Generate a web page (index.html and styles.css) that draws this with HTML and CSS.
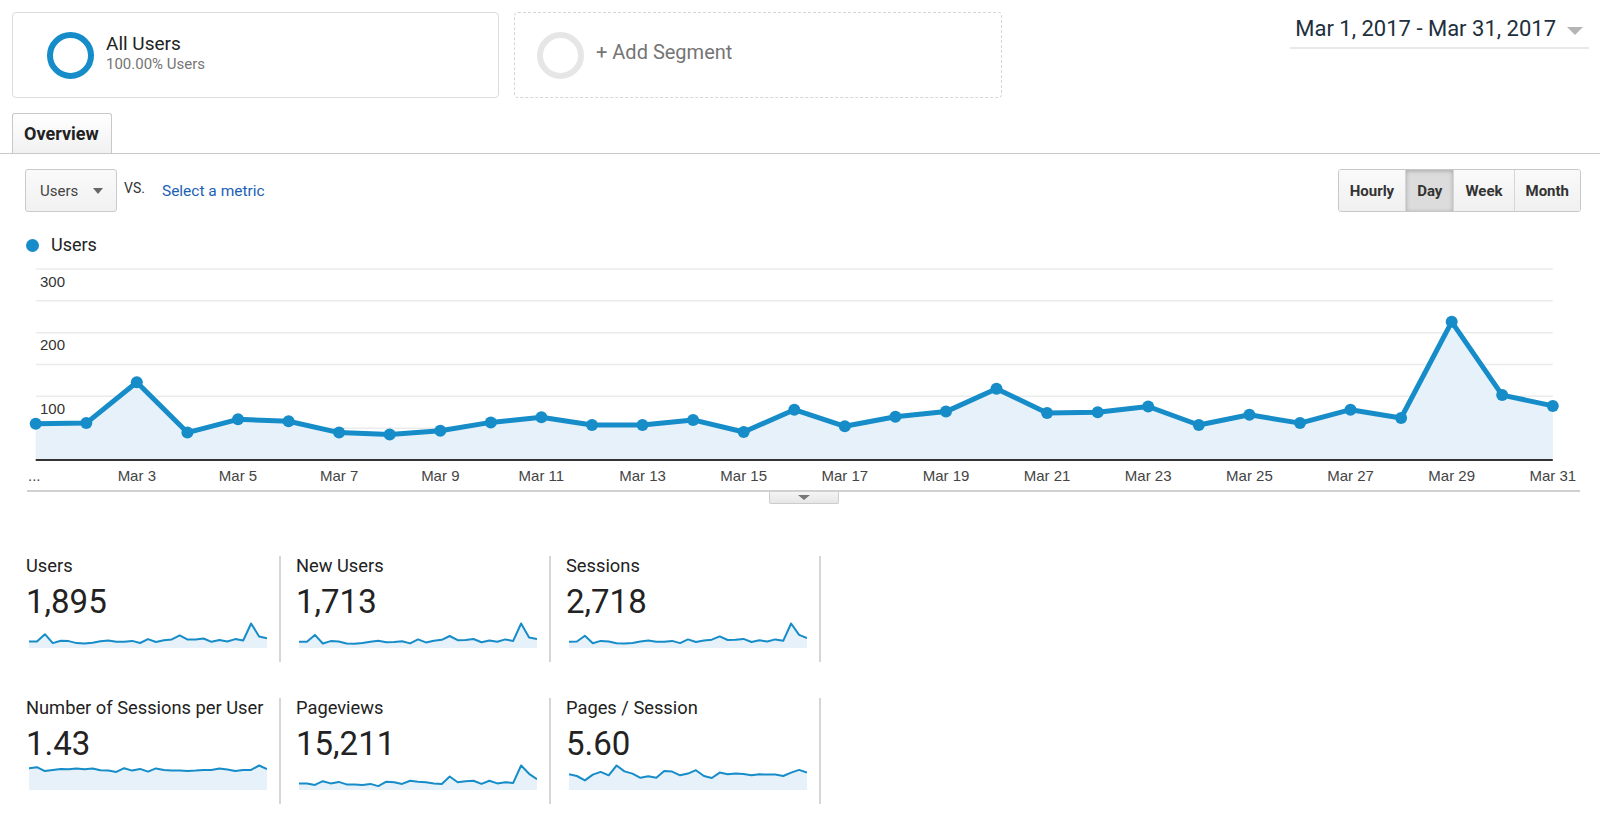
FILE: index.html
```html
<!DOCTYPE html>
<html lang="en">
<head>
    <meta charset="UTF-8">
    <meta name="viewport" content="width=device-width, initial-scale=1.0">
    <title>Audience Overview</title>
    <link rel="stylesheet" href="styles.css">
</head>
<body>
    <div class="segments">
        <div class="segment">
            <span class="segment-ring"></span>
            <div class="segment-text">
                <div class="segment-name">All Users</div>
                <div class="segment-share">100.00% Users</div>
            </div>
        </div>
        <div class="segment segment-add">
            <span class="segment-ring"></span>
            <div class="segment-add-label">+ Add Segment</div>
        </div>
        <div class="date-range">
            <span>Mar 1, 2017 - Mar 31, 2017</span>
            <span class="caret"></span>
        </div>
    </div>

    <div class="tabs">
        <div class="tab">Overview</div>
    </div>

    <div class="report">
        <div class="controls">
            <div class="metric-select">Users<span class="caret-small"></span></div>
            <span class="vs">VS.</span>
            <a class="metric-link" href="#">Select a metric</a>
            <div class="interval">
                <button>Hourly</button>
                <button class="active">Day</button>
                <button>Week</button>
                <button>Month</button>
            </div>
        </div>

        <div class="legend"><span class="legend-dot"></span>Users</div>

        <svg id="chart" class="chart" width="1556" height="232"></svg>

        <div class="chart-footer">
            <div class="collapse"><span></span></div>
        </div>
    </div>

    <div class="summary">
        <div class="tile">
            <div class="tile-label">Users</div>
            <div class="tile-value">1,895</div>
            <svg class="spark" data-series="users" width="238" height="28"></svg>
        </div>
        <div class="tile">
            <div class="tile-label">New Users</div>
            <div class="tile-value">1,713</div>
            <svg class="spark" data-series="newUsers" width="238" height="28"></svg>
        </div>
        <div class="tile">
            <div class="tile-label">Sessions</div>
            <div class="tile-value">2,718</div>
            <svg class="spark" data-series="sessions" width="238" height="28"></svg>
        </div>
        <div class="tile">
            <div class="tile-label">Number of Sessions per User</div>
            <div class="tile-value">1.43</div>
            <svg class="spark" data-series="sessionsPerUser" width="238" height="28"></svg>
        </div>
        <div class="tile">
            <div class="tile-label">Pageviews</div>
            <div class="tile-value">15,211</div>
            <svg class="spark" data-series="pageviews" width="238" height="28"></svg>
        </div>
        <div class="tile">
            <div class="tile-label">Pages / Session</div>
            <div class="tile-value">5.60</div>
            <svg class="spark" data-series="pagesPerSession" width="238" height="28"></svg>
        </div>
    </div>

    <script>
        const SVG_NS = 'http://www.w3.org/2000/svg';

        // daily values for March 2017
        const series = {
            users: [57, 58, 122, 43, 64, 61, 43, 40, 46, 59, 67, 55, 55, 63, 44, 79, 53, 68, 76, 112, 74, 75, 84, 55, 71, 58, 79, 66, 217, 102, 85],
            newUsers: [52, 53, 110, 38, 58, 55, 38, 36, 41, 53, 61, 49, 50, 56, 39, 72, 47, 61, 69, 101, 66, 68, 76, 49, 64, 52, 72, 60, 206, 88, 75],
            sessions: [82, 84, 160, 62, 92, 86, 62, 58, 66, 85, 96, 80, 80, 92, 64, 112, 78, 98, 108, 150, 104, 106, 118, 78, 100, 84, 112, 94, 318, 170, 128],
            sessionsPerUser: [.89, .93, .77, .82, .86, .85, .88, .85, .88, .81, .79, .74, .89, .79, .86, .75, .88, .82, .79, .79, .77, .79, .82, .82, .88, .84, .77, .82, .82, 1, .85],
            pageviews: [.27, .27, .21, .36, .27, .33, .23, .23, .21, .25, .16, .34, .32, .25, .38, .34, .32, .27, .25, .55, .32, .36, .38, .25, .38, .27, .32, .29, 1, .66, .44],
            pagesPerSession: [.64, .57, .39, .63, .74, .6, 1, .76, .67, .5, .56, .5, .78, .75, .6, .67, .81, .57, .49, .71, .64, .67, .65, .6, .64, .63, .63, .57, .71, .82, .71]
        };

        function el(name, attrs, parent) {
            const node = document.createElementNS(SVG_NS, name);
            for (const key in attrs) node.setAttribute(key, attrs[key]);
            parent.appendChild(node);
            return node;
        }

        function drawChart() {
            const svg = document.getElementById('chart');
            const data = series.users;
            const left = 10.7;
            const step = 50.57;
            const zero = 202;
            const scale = 0.6367;
            const x = i => +(left + i * step).toFixed(1);
            const y = v => +(zero - v * scale).toFixed(1);
            const last = data.length - 1;

            for (let v = 50; v <= 300; v += 50) {
                el('line', { x1: left, x2: x(last), y1: y(v), y2: y(v), class: 'grid' }, svg);
                if (v % 100 === 0) {
                    el('text', { x: 15, y: y(v) + 17.5, class: 'y-label' }, svg).textContent = v;
                }
            }

            const points = data.map((v, i) => x(i) + ',' + y(v));
            el('path', {
                d: 'M' + x(0) + ',' + zero + ' L' + points.join(' L') + ' L' + x(last) + ',' + zero + ' Z',
                class: 'area'
            }, svg);
            el('line', { x1: left, x2: x(last), y1: zero, y2: zero, class: 'axis' }, svg);
            el('polyline', { points: points.join(' '), class: 'line' }, svg);
            data.forEach((v, i) => el('circle', { cx: x(i), cy: y(v), r: 6, class: 'dot' }, svg));

            el('text', { x: 3, y: 223, class: 'x-label' }, svg).textContent = '...';
            for (let i = 2; i <= last; i += 2) {
                el('text', { x: x(i), y: 223, class: 'x-label', 'text-anchor': 'middle' }, svg).textContent = 'Mar ' + (i + 1);
            }
        }

        function drawSpark(svg) {
            const data = series[svg.dataset.series];
            const width = 238;
            const bottom = 27;
            const range = 24.5;
            const max = Math.max(...data);
            const step = width / (data.length - 1);
            const points = data.map((v, i) => (i * step).toFixed(1) + ',' + (bottom - v / max * range).toFixed(1));

            el('path', { d: 'M0,' + bottom + ' L' + points.join(' L') + ' L' + width + ',' + bottom + ' Z', class: 'spark-area' }, svg);
            el('polyline', { points: points.join(' '), class: 'spark-line' }, svg);
        }

        drawChart();
        document.querySelectorAll('.spark').forEach(drawSpark);
    </script>
</body>
</html>
```

FILE: styles.css
```css
* {
    margin: 0;
    padding: 0;
    box-sizing: border-box;
}

body {
    font-family: Roboto, "Liberation Sans", sans-serif;
    color: #222;
    background: #fff;
}

/* segment picker + date range */
.segments {
    display: flex;
    align-items: flex-start;
    padding: 12px 11px 0 12px;
}

.segment {
    display: flex;
    align-items: center;
    width: 487px;
    height: 86px;
    padding-left: 34px;
    border: 1px solid #dcdcdc;
    border-radius: 4px;
}

.segment-ring {
    flex-shrink: 0;
    width: 47px;
    height: 47px;
    border: 6px solid #168cc8;
    border-radius: 50%;
}

.segment-text {
    margin-left: 12px;
    margin-bottom: 2px;
}

.segment-name {
    font-size: 19px;
    line-height: 20px;
    color: #222;
}

.segment-share {
    font-size: 15px;
    line-height: 20px;
    color: #757575;
}

.segment-add {
    width: 488px;
    margin-left: 15px;
    padding-left: 22px;
    border: 1px dashed #d6d6d6;
}

.segment-add .segment-ring {
    border-color: #e6e6e6;
}

.segment-add-label {
    margin-left: 12px;
    margin-bottom: 6px;
    font-size: 20px;
    line-height: 24px;
    color: #757575;
}

.date-range {
    display: flex;
    align-items: center;
    margin-left: auto;
    margin-top: 3px;
    padding: 0 6px 4px 5px;
    border-bottom: 2px solid #e8e8e8;
    font-size: 22px;
    line-height: 28px;
    color: #212f3d;
}

.date-range .caret {
    margin: 3px 0 0 11px;
    border-left: 8px solid transparent;
    border-right: 8px solid transparent;
    border-top: 8px solid #b5b5b5;
}

/* tabs */
.tabs {
    display: flex;
    margin-top: 15px;
    padding-left: 12px;
    border-bottom: 1px solid #c8c8c8;
}

.tab {
    height: 40px;
    padding: 0 12px 0 11px;
    border: 1px solid #c8c8c8;
    border-bottom: none;
    border-radius: 3px 3px 0 0;
    background: linear-gradient(#fff, #f1f1f1);
    font-size: 18px;
    font-weight: 700;
    line-height: 39px;
    color: #222;
}

/* report */
.report {
    padding: 15px 19px 0 25px;
}

.controls {
    display: flex;
    align-items: center;
}

.metric-select {
    display: flex;
    align-items: center;
    width: 92px;
    height: 43px;
    padding-left: 14px;
    border: 1px solid #cacaca;
    border-radius: 3px;
    background: linear-gradient(#fafafa, #f1f1f1);
    font-size: 15px;
    color: #444;
}

.caret-small {
    margin-left: 15px;
    border-left: 5.5px solid transparent;
    border-right: 5.5px solid transparent;
    border-top: 6px solid #666;
}

.vs {
    margin-left: 7px;
    margin-bottom: 6px;
    font-size: 14px;
    color: #333;
}

.metric-link {
    margin-left: 17px;
    font-size: 15.5px;
    color: #1b5fb5;
    text-decoration: none;
}

.interval {
    display: flex;
    height: 43px;
    margin-left: auto;
    border: 1px solid #c8c8c8;
    border-radius: 3px;
    overflow: hidden;
}

.interval button {
    padding: 0 11px;
    border: none;
    border-left: 1px solid #d6d6d6;
    background: linear-gradient(#fafafa, #f0f0f0);
    font-family: inherit;
    font-size: 15px;
    font-weight: 700;
    color: #333;
}

.interval button:first-child {
    border-left: none;
}

.interval button.active {
    background: #dcdcdc;
    box-shadow: inset 0 1px 4px rgba(0, 0, 0, 0.25);
}

.legend {
    display: flex;
    align-items: center;
    height: 20px;
    margin-top: 23px;
    font-size: 18px;
    line-height: 20px;
    color: #222;
}

.legend-dot {
    width: 13px;
    height: 13px;
    margin: 0 12px 0 1px;
    border-radius: 50%;
    background: #168cc8;
}

/* main chart */
.chart {
    display: block;
    margin-top: 3px;
}

.chart .grid {
    stroke: #ebebeb;
    stroke-width: 1.5;
}

.chart .area {
    fill: #e7f1f9;
}

.chart .axis {
    stroke: #333;
    stroke-width: 2;
}

.chart .line {
    fill: none;
    stroke: #168cc8;
    stroke-width: 5;
    stroke-linejoin: round;
}

.chart .dot {
    fill: #168cc8;
}

.chart .y-label {
    font: 15px "Liberation Sans", Arial, sans-serif;
    fill: #333;
}

.chart .x-label {
    font: 15px "Liberation Sans", Arial, sans-serif;
    fill: #444;
}

.chart-footer {
    margin: 0 1px 0 2px;
    border-top: 2px solid #d0d0d0;
}

.collapse {
    display: flex;
    justify-content: center;
    width: 70px;
    height: 12px;
    margin: 0 auto;
    padding-top: 3px;
    border: 1px solid #ccc;
    border-top: none;
    border-radius: 0 0 2px 2px;
    background: linear-gradient(#f5f5f5, #e6e6e6);
}

.collapse span {
    height: 0;
    border-left: 6px solid transparent;
    border-right: 6px solid transparent;
    border-top: 5px solid #777;
}

/* metric summary tiles */
.summary {
    display: grid;
    grid-template-columns: repeat(3, 270px);
    row-gap: 36px;
    margin-top: 52px;
    padding-left: 11px;
}

.tile {
    height: 106px;
    padding: 0 12px 0 15px;
    border-right: 2px solid #d6d6d6;
}

.tile-label {
    font-size: 18.3px;
    line-height: 19px;
    color: #222;
    white-space: nowrap;
}

.tile-value {
    margin-top: 8px;
    font-size: 33px;
    line-height: 38px;
    color: #222;
}

.spark {
    display: block;
    margin: 0 0 0 3px;
}

.spark-area {
    fill: #e7f1f9;
}

.spark-line {
    fill: none;
    stroke: #168cc8;
    stroke-width: 2;
    stroke-linejoin: round;
}
```
